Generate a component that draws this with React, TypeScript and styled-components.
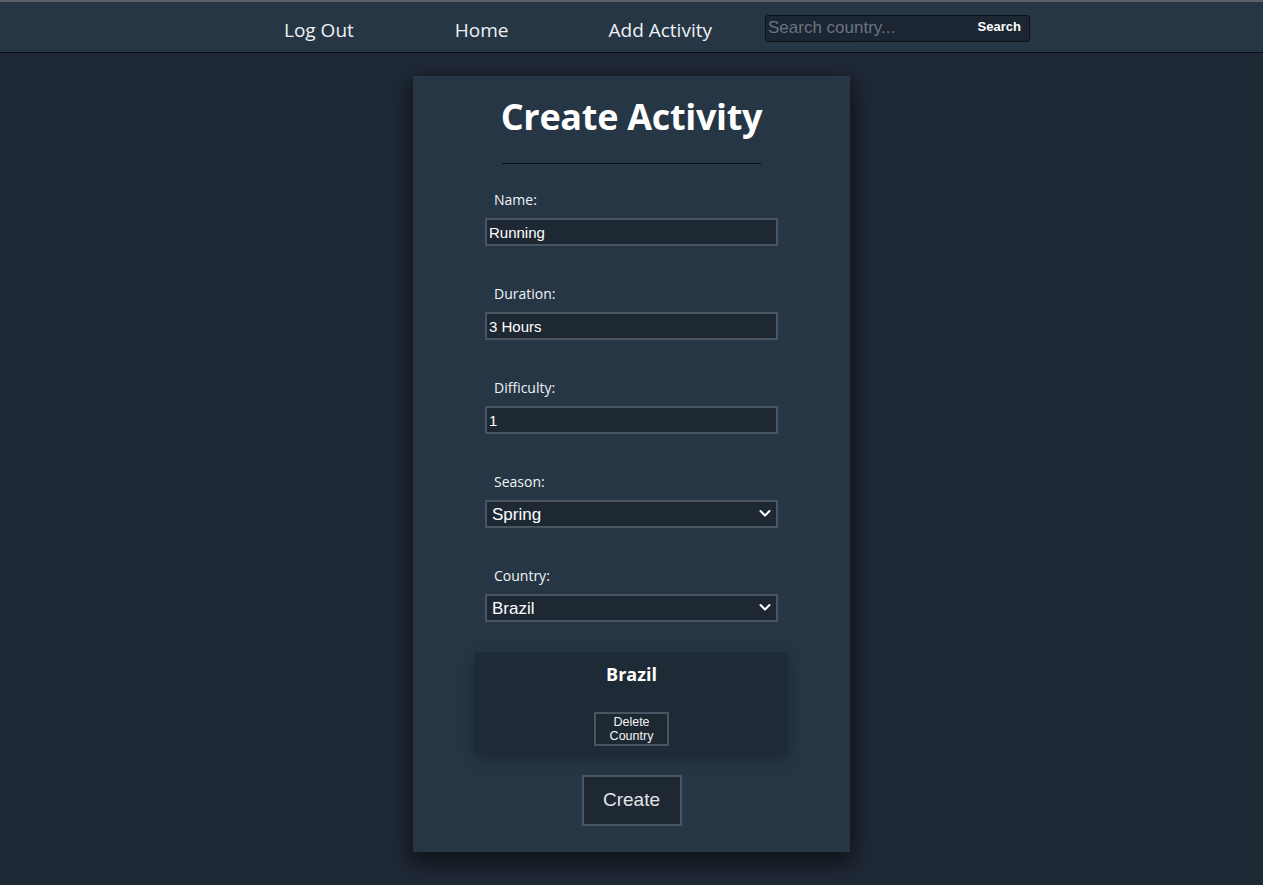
import React from "react";
import styled, { createGlobalStyle } from "styled-components";

const Global = createGlobalStyle`
  html, body { margin: 0; padding: 0; }
  body {
    background: #1f2936;
    font-family: "Open Sans", "Noto Sans", sans-serif;
    color: #f3f4f6;
    min-height: 885px;
  }
  * { box-sizing: border-box; }
`;

const TopLine = styled.div`
  height: 2px;
  background: #5b6068;
`;

const Nav = styled.nav`
  height: 51px;
  background: #263645;
  border-bottom: 1px solid #0a0e14;
  display: flex;
  align-items: center;
  padding-left: 284px;
`;

const NavLink = styled.a<{ $gap: number }>`
  font-family: "Open Sans", sans-serif;
  font-size: 19px;
  color: #eef1f4;
  text-decoration: none;
  margin-right: ${(p) => p.$gap}px;
  line-height: 26px;
  padding-top: 6px;
`;

const SearchBox = styled.form`
  width: 265px;
  height: 27px;
  margin-top: 2px;
  display: flex;
  align-items: center;
  background: #1c2633;
  border: 1px solid #0d1219;
  border-radius: 3px;
  overflow: hidden;
`;

const SearchInput = styled.input`
  flex: 1;
  min-width: 0;
  height: 100%;
  background: transparent;
  border: none;
  outline: none;
  padding: 0 2px;
  font-family: "Liberation Sans", Arial, sans-serif;
  font-size: 17px;
  color: #e5e7eb;
  &::placeholder { color: #6b7380; }
`;

const SearchButton = styled.button`
  background: transparent;
  border: none;
  color: #ffffff;
  font-family: "Liberation Sans", Arial, sans-serif;
  font-weight: bold;
  font-size: 13px;
  padding: 0 8px 3px 6px;
  cursor: pointer;
`;

const Main = styled.main`
  display: flex;
  justify-content: center;
  padding-top: 23px;
`;

const Card = styled.section`
  width: 437px;
  background: #263645;
  box-shadow: 0 8px 22px 4px rgba(0, 0, 0, 0.55);
  padding: 18px 0 26px;
  display: flex;
  flex-direction: column;
  align-items: center;
`;

const Title = styled.h1`
  margin: 0;
  font-family: "Open Sans", sans-serif;
  font-weight: 700;
  font-size: 36px;
  line-height: 45px;
  color: #ffffff;
  letter-spacing: -0.3px;
`;

const Rule = styled.hr`
  width: 259px;
  margin: 24px 0 26px;
  border: none;
  border-top: 1px solid #0b0f14;
  height: 0;
`;

const Field = styled.div`
  width: 293px;
  margin-bottom: 38px;
  display: flex;
  flex-direction: column;
`;

const Label = styled.label`
  font-family: "Open Sans", sans-serif;
  font-size: 14px;
  line-height: 20px;
  color: #f1f3f5;
  padding-left: 9px;
  margin-bottom: 8px;
`;

const TextInput = styled.input`
  width: 293px;
  height: 28px;
  background: #1e2833;
  border: 2px solid #4a5562;
  color: #ffffff;
  font-family: "Liberation Sans", Arial, sans-serif;
  font-size: 15px;
  padding: 0 2px;
  outline: none;
`;

const SelectWrap = styled.div`
  position: relative;
  width: 293px;
  height: 28px;
`;

const Select = styled.select`
  width: 100%;
  height: 100%;
  appearance: none;
  background: #1e2833;
  border: 2px solid #4a5562;
  color: #ffffff;
  font-family: "Liberation Sans", Arial, sans-serif;
  font-size: 17px;
  padding: 0 5px;
  outline: none;
`;

const Chevron = styled.svg`
  position: absolute;
  right: 7px;
  top: 9px;
  pointer-events: none;
`;

const CountryBox = styled.div`
  width: 313px;
  margin-top: -8px;
  background: #1f2a37;
  box-shadow: 0 6px 14px rgba(0, 0, 0, 0.28);
  padding: 9px 0 6px;
  display: flex;
  flex-direction: column;
  align-items: center;
`;

const CountryName = styled.h3`
  margin: 0 0 24px;
  font-family: "Open Sans", sans-serif;
  font-weight: 700;
  font-size: 18px;
  line-height: 27px;
  color: #ffffff;
`;

const DeleteButton = styled.button`
  width: 75px;
  height: 34px;
  background: #1e2833;
  border: 2px solid #4a5562;
  color: #f3f4f6;
  font-family: "Liberation Sans", Arial, sans-serif;
  font-size: 12.5px;
  line-height: 14px;
  padding: 0;
`;

const CreateButton = styled.button`
  margin-top: 23px;
  width: 100px;
  height: 51px;
  background: #1e2833;
  border: 2px solid #4a5562;
  color: #e2e5e9;
  font-family: "Liberation Sans", Arial, sans-serif;
  font-size: 19px;
  padding: 0 0 2px;
`;

const ChevronIcon = () => (
  <Chevron width="12" height="9" viewBox="0 0 12 9">
    <path d="M1.5 2 L6 6.5 L10.5 2" fill="none" stroke="#ffffff" strokeWidth="2" strokeLinecap="round" strokeLinejoin="round" />
  </Chevron>
);

export default function App() {
  return (
    <>
      <Global />
      <TopLine />
      <Nav>
        <NavLink href="#" $gap={101}>Log Out</NavLink>
        <NavLink href="#" $gap={100}>Home</NavLink>
        <NavLink href="#" $gap={53}>Add Activity</NavLink>
        <SearchBox onSubmit={(e) => e.preventDefault()}>
          <SearchInput placeholder="Search country..." />
          <SearchButton type="submit">Search</SearchButton>
        </SearchBox>
      </Nav>
      <Main>
        <Card>
          <Title>Create Activity</Title>
          <Rule />
          <Field>
            <Label>Name:</Label>
            <TextInput defaultValue="Running" />
          </Field>
          <Field>
            <Label>Duration:</Label>
            <TextInput defaultValue="3 Hours" />
          </Field>
          <Field>
            <Label>Difficulty:</Label>
            <TextInput defaultValue="1" />
          </Field>
          <Field>
            <Label>Season:</Label>
            <SelectWrap>
              <Select defaultValue="Spring">
                <option>Summer</option>
                <option>Autumn</option>
                <option>Winter</option>
                <option>Spring</option>
              </Select>
              <ChevronIcon />
            </SelectWrap>
          </Field>
          <Field>
            <Label>Country:</Label>
            <SelectWrap>
              <Select defaultValue="Brazil">
                <option>Argentina</option>
                <option>Brazil</option>
                <option>Chile</option>
              </Select>
              <ChevronIcon />
            </SelectWrap>
          </Field>
          <CountryBox>
            <CountryName>Brazil</CountryName>
            <DeleteButton>Delete<br />Country</DeleteButton>
          </CountryBox>
          <CreateButton>Create</CreateButton>
        </Card>
      </Main>
    </>
  );
}
